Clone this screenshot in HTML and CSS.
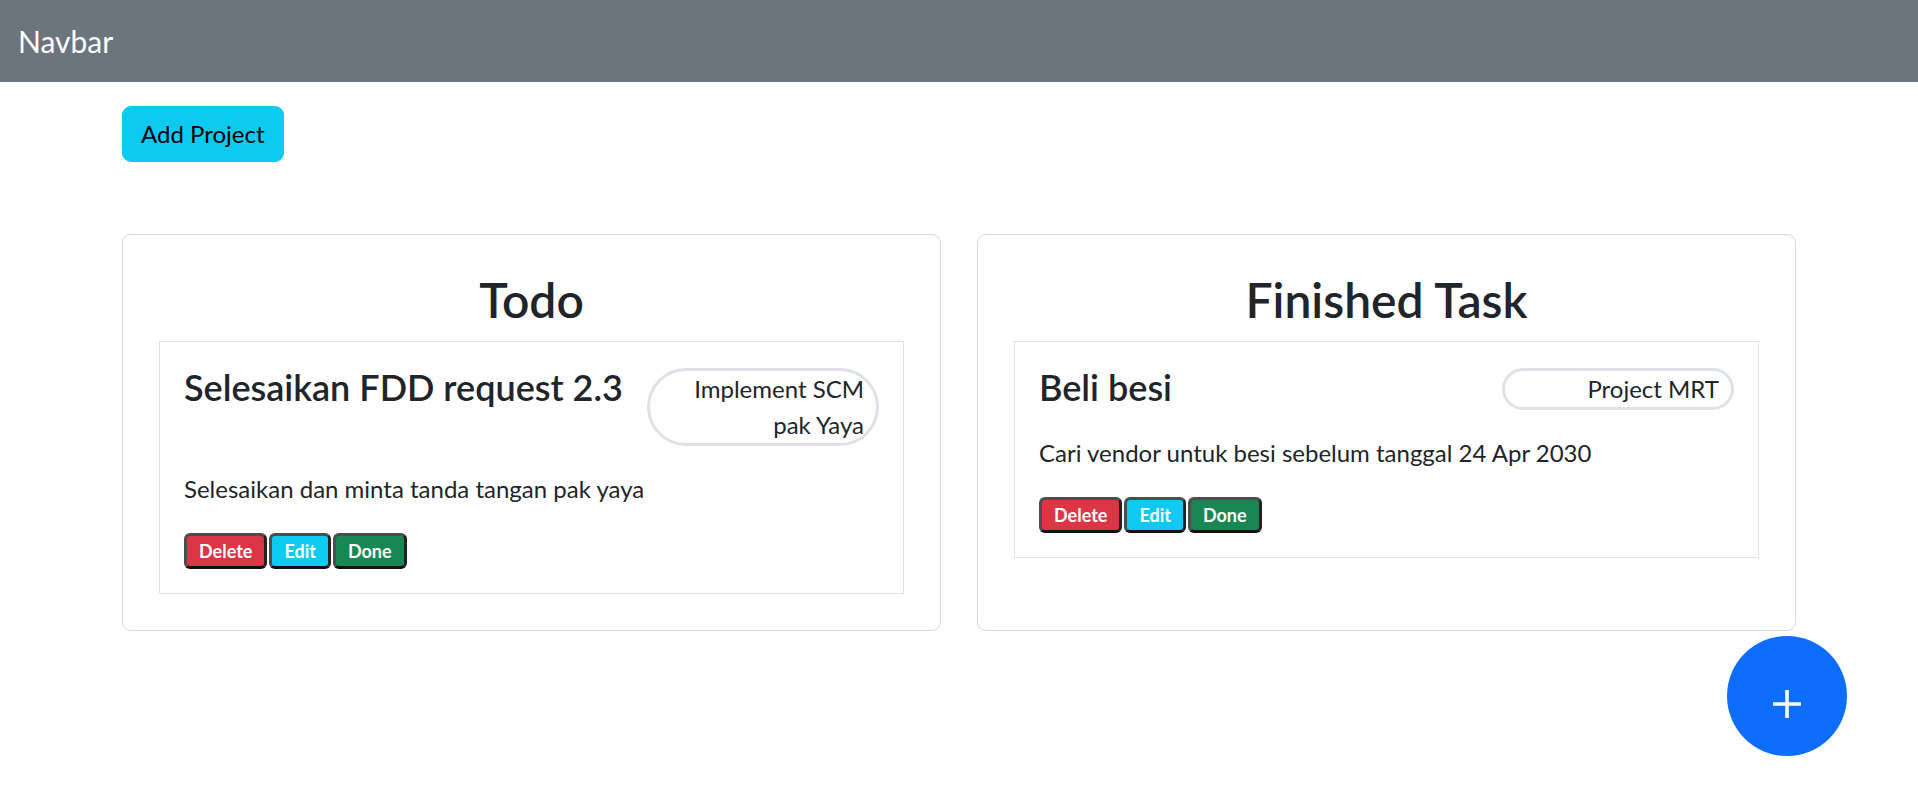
FILE: index.html
```html
<!DOCTYPE html>
<html lang="id">
<head>
<meta charset="utf-8">
<title>Projects</title>
<link rel="stylesheet" href="styles.css">
</head>
<body>
<nav class="navbar">
  <span class="brand">Navbar</span>
</nav>
<main class="container">
  <button class="btn-add" type="button">Add Project</button>
  <div class="board">
    <section class="panel">
      <h2 class="panel-title">Todo</h2>
      <article class="task">
        <div class="task-head">
          <h4 class="task-title">Selesaikan FDD request 2.3</h4>
          <span class="project-pill">Implement SCM pak Yaya</span>
        </div>
        <p class="task-desc">Selesaikan dan minta tanda tangan pak yaya</p>
        <div class="task-actions">
          <button class="tag tag-delete" type="button">Delete</button>
          <button class="tag tag-edit" type="button">Edit</button>
          <button class="tag tag-done" type="button">Done</button>
        </div>
      </article>
    </section>
    <section class="panel">
      <h2 class="panel-title">Finished Task</h2>
      <article class="task">
        <div class="task-head">
          <h4 class="task-title">Beli besi</h4>
          <span class="project-pill">Project MRT</span>
        </div>
        <p class="task-desc">Cari vendor untuk besi sebelum tanggal 24 Apr 2030</p>
        <div class="task-actions">
          <button class="tag tag-delete" type="button">Delete</button>
          <button class="tag tag-edit" type="button">Edit</button>
          <button class="tag tag-done" type="button">Done</button>
        </div>
      </article>
    </section>
  </div>
</main>
<button class="fab" type="button" aria-label="Add">
  <svg class="fab-icon" width="30" height="30" viewBox="0 0 30 30" aria-hidden="true">
    <path d="M15 1V29M1 15H29" stroke="#ffffff" stroke-width="3.6" fill="none"/>
  </svg>
</button>
</body>
</html>
```

FILE: styles.css
```css
* {
  box-sizing: border-box;
}

html, body {
  margin: 0;
  padding: 0;
}

body {
  font-family: Lato, "Noto Sans", sans-serif;
  font-size: 24px;
  line-height: 36px;
  color: #212529;
  background: #ffffff;
}

.navbar {
  height: 82px;
  background: #6c757d;
  display: flex;
  align-items: center;
  padding: 0 18px;
}

.brand {
  color: #ffffff;
  font-size: 30px;
  line-height: 45px;
}

.container {
  width: 1674px;
  margin: 0 auto;
  padding-top: 24px;
}

.btn-add {
  display: block;
  font-family: inherit;
  font-size: 24px;
  line-height: 36px;
  color: #000000;
  background: #0dcaf0;
  border: 1px solid #0dcaf0;
  border-radius: 9px;
  padding: 9px 18px;
  margin: 0 0 72px 0;
}

.board {
  display: grid;
  grid-template-columns: 1fr 1fr;
  gap: 36px;
}

.panel {
  border: 1px solid #d9d9d9;
  border-radius: 9px;
  padding: 36px;
}

.panel-title {
  margin: 0 0 12px 0;
  text-align: center;
  font-size: 48px;
  line-height: 57.6px;
  font-weight: 600;
}

.task {
  border: 1px solid #dee2e6;
  padding: 24px;
}

.task-head {
  display: flex;
  align-items: flex-start;
  margin-bottom: 25px;
}

.task-title {
  flex: 1 1 auto;
  margin: 0;
  font-size: 36px;
  line-height: 43.2px;
  font-weight: 600;
}

.project-pill {
  flex: 0 0 33.333%;
  margin-top: 2px;
  border: 3px solid #dee2e6;
  border-radius: 999px;
  padding: 0 12px;
  text-align: right;
  font-size: 24px;
  line-height: 36px;
}

.task-desc {
  margin: 0 0 26px 0;
}

.task-actions {
  display: flex;
  gap: 2px;
}

.tag {
  font-family: inherit;
  font-size: 18px;
  font-weight: 700;
  line-height: 18px;
  color: #ffffff;
  height: 36px;
  padding: 0 12px;
  border: 3px solid #4d4d4d;
  border-right-color: #222222;
  border-bottom-color: #111111;
  border-radius: 6px;
}

.tag-delete {
  background: #dc3545;
}

.tag-edit {
  background: #0dcaf0;
}

.tag-done {
  background: #198754;
}

.fab {
  position: fixed;
  right: 71px;
  bottom: 39px;
  width: 120px;
  height: 120px;
  border: none;
  border-radius: 50%;
  background: #0d6efd;
  display: flex;
  align-items: center;
  justify-content: center;
  padding: 15px 0 0 0;
}

.fab-icon {
  display: block;
}
```
